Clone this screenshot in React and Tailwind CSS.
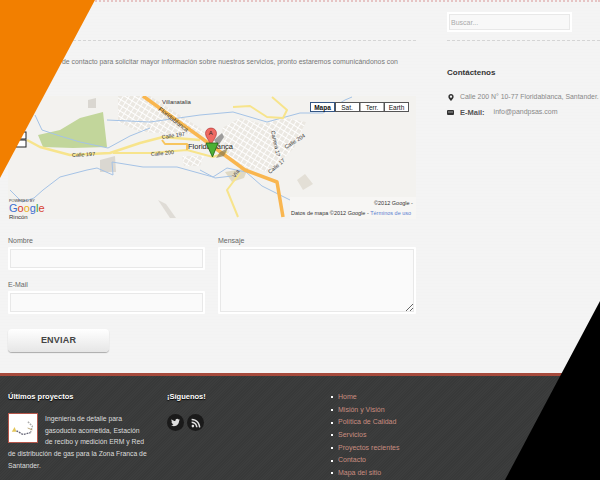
import { FaMapMarkerAlt, FaTwitter, FaRss } from "react-icons/fa";

const links = ["Home", "Misión y Visión", "Política de Calidad", "Servicios", "Proyectos recientes", "Contacto", "Mapa del sitio"];

function MapDrawing() {
  return (
    <svg viewBox="8 96 408 123" className="block h-[123px] w-[408px] bg-[#f3f2ef]" style={{ fontFamily: "Liberation Sans, sans-serif" }}>
      <defs>
        <pattern id="streets" width="5" height="5" patternUnits="userSpaceOnUse" patternTransform="rotate(32)">
          <rect width="5" height="5" fill="#ebe8e2" />
          <path d="M0 0H5M0 0V5" stroke="#ffffff" strokeWidth="1.8" />
        </pattern>
      </defs>

      {/* built up areas */}
      <path d="M118 96H150L200 128L206 134L180 134L140 132L118 122Z" fill="url(#streets)" />
      <path d="M222 128L240 118L262 124L286 118L306 122L294 148L270 172L248 168L226 158Z" fill="url(#streets)" />
      <path d="M182 156L204 156L200 166L184 166Z" fill="url(#streets)" />
      <path d="M100 160L115 156L116 172L100 172Z" fill="#dad7d1" />
      <path d="M297 180L305 174L313 184L303 190Z" fill="#e3dfd6" />
      <path d="M225 172L248 168L244 178L232 182Z" fill="#dfd9c4" />
      <path d="M88 100L96 98L96 108L88 108Z" fill="#dad7d1" />
      <path d="M158 200L170 218L176 218L166 204Z" fill="#dfdcd6" />

      {/* park */}
      <path d="M38 135L60 130L80 118L103 112L107 147L73 148L43 147Z" fill="#c2d69b" />

      {/* rivers */}
      <g fill="none" stroke="#a5c3e6" strokeWidth="1">
        <path d="M35 115L42 130L60 136L80 142L108 148L130 136L150 128" />
        <path d="M107 120L150 122L200 115L233 112L267 122L300 113L323 113L345 100L352 97" />
        <path d="M10 190L22 202L34 198L43 190L60 177L87 170L97 168L113 175L112 162L143 167L177 167L213 177L227 168L246 172L262 186L290 200" />
        <path d="M200 170L215 178L232 176" />
      </g>

      {/* yellow roads */}
      <g fill="none" stroke="#f7e48c" strokeWidth="2" strokeLinejoin="round">
        <path d="M27 140L40 147L70 155L110 153L140 143L163 137L200 140" strokeWidth="2.5" />
        <path d="M113 153L150 153L187 150L213 157L227 152" />
        <path d="M162 140L165 144L187 144L187 150" stroke="#f7c55f" />
        <path d="M233 107L250 106L267 117L283 118L287 110L272 97" />
        <path d="M240 173L227 190L238 217" />
      </g>

      {/* main road */}
      <path d="M143 96L200 137L245 170L277 182L283 217" fill="none" stroke="#f9b64f" strokeWidth="3.5" strokeLinejoin="round" />

      {/* road names */}
      <g fontSize="5.500" fill="#333">
        <text x="162" y="104" fontSize="6">Villanatalia</text>
        <text x="72" y="157" transform="rotate(-3 72 157)">Calle 197</text>
        <text x="162" y="139" transform="rotate(-8 162 139)">Calle 197</text>
        <text x="151" y="156" transform="rotate(-5 151 156)">Calle 200</text>
        <text x="158" y="110" fontSize="6" transform="rotate(38 158 110)">Floridablanca</text>
        <text x="271" y="131" transform="rotate(78 271 131)">Carrera 17</text>
        <text x="286" y="149" transform="rotate(-32 286 149)">Calle 204</text>
        <text x="270" y="174" transform="rotate(-40 270 174)">Calle 17</text>
        <text x="235" y="178" transform="rotate(-55 235 178)">Vía</text>
        <text x="9" y="218.500" fontSize="6">Rincón</text>
      </g>
      <text x="188" y="149" fontSize="7.500" fill="#222">Floridablanca</text>

      {/* marker */}
      <path d="M214 140L222 133L224 137L218 146Z" fill="#777" opacity="0.7" />
      <path d="M220 152L228 148L224 156L216 158Z" fill="#8a7a50" opacity="0.7" />
      <path d="M211 128C207.500 128 205.500 130.500 205.500 133.500C205.500 137.500 209.500 140 211 146C212.500 140 216.500 137.500 216.500 133.500C216.500 130.500 214.500 128 211 128Z" fill="#ee6a63" stroke="#a33" strokeWidth="0.6" />
      <text x="208.800" y="135" fontSize="6" fill="#222">A</text>
      <path d="M206 143L218 143L212.500 157Z" fill="#4cb034" stroke="#1f5f14" strokeWidth="0.8" />

      {/* zoom control */}
      <rect x="16" y="132" width="10" height="7" fill="#fff" stroke="#222" />
      <rect x="16" y="140" width="10" height="7" fill="#fff" stroke="#222" />

      {/* map type buttons */}
      <g fontSize="6.500" fill="#111" textAnchor="middle">
        <rect x="310.500" y="102.500" width="24" height="9" fill="#fff" stroke="#345684" />
        <text x="322.500" y="109.500" fontWeight="700">Mapa</text>
        <rect x="335.500" y="102.500" width="24" height="9" fill="#fff" stroke="#555" />
        <text x="347" y="109.500">Sat.</text>
        <rect x="360" y="102.500" width="24" height="9" fill="#fff" stroke="#555" />
        <text x="372" y="109.500">Terr.</text>
        <rect x="384.500" y="102.500" width="24" height="9" fill="#fff" stroke="#555" />
        <text x="396.500" y="109.500">Earth</text>
      </g>

      {/* attribution */}
      <rect x="290" y="197" width="126" height="22" fill="#fff" opacity="0.35" />
      <text x="374" y="204.500" fontSize="5.500" fill="#333">©2012 Google -</text>
      <text x="291" y="214.500" fontSize="5.500" fill="#333">
        Datos de mapa ©2012 Google - <tspan fill="#5b7fd0">Términos de uso</tspan>
      </text>
      <text x="9" y="201.500" fontSize="3.800" fill="#333">POWERED BY</text>
      <text x="9" y="211.500" fontSize="11" fontWeight="400">
        <tspan fill="#3b6fd0">G</tspan>
        <tspan fill="#d8402f">o</tspan>
        <tspan fill="#e8b020">o</tspan>
        <tspan fill="#3b6fd0">g</tspan>
        <tspan fill="#3a9a3a">l</tspan>
        <tspan fill="#d8402f">e</tspan>
      </text>
    </svg>
  );
}

function Label({ children }) {
  return <div className="h-[12px] text-[7px] leading-[11px] text-[#666]">{children}</div>;
}

const fieldClass = "block w-full rounded-[1px] border-2 border-white bg-[#fafafa] shadow-[inset_0_0_0_1px_#e8e8e8] outline-none";

export default function App() {
  return (
    <div className="relative flex h-[480px] w-[600px] flex-col overflow-hidden bg-[#f4f4f4] font-['Liberation_Sans',Arial,sans-serif]">
      {/* content */}
      <div className="flex h-[373px] border-t-2 border-dotted border-[#e6c4c4] bg-[repeating-linear-gradient(0deg,#f4f4f4_0,#f4f4f4_2px,#f3f3f3_2px,#f3f3f3_3px)]">
        <div className="ml-2 w-[408px]">
          <div className="mt-[38px] border-t border-dashed border-[#d5d5d5]" />
          <p className="mt-[15px] h-[40px] pl-[54px] text-[6.900px] leading-[12px] text-[#777]">
            de contacto para solicitar mayor información sobre nuestros servicios, pronto estaremos comunicándonos con
          </p>
          <MapDrawing />
          <div className="mt-4 grid grid-cols-[197px_198px] gap-x-[13px]">
            <div className="flex flex-col gap-[9px]">
              <div>
                <Label>Nombre</Label>
                <input className={`${fieldClass} h-[23px]`} />
              </div>
              <div>
                <Label>E-Mail</Label>
                <input className={`${fieldClass} h-[23px]`} />
              </div>
            </div>
            <div>
              <Label>Mensaje</Label>
              <textarea className={`${fieldClass} h-[67px]`} />
            </div>
          </div>
          <button className="mt-[15px] flex h-[23px] w-[101px] items-center justify-center rounded-sm bg-gradient-to-b from-white to-[#e6e6e6] text-[9px] font-bold tracking-[0.2px] text-[#444] shadow-[0_1px_1px_#aaa]">
            ENVIAR
          </button>
        </div>

        <div className="ml-[31px] flex-1">
          <input
            placeholder="Buscar..."
            className="mt-[10px] block h-[20px] w-[125px] border-2 border-white bg-[#f8f8f8] px-[2px] text-[7px] shadow-[inset_0_0_0_1px_#e8e8e8] outline-none placeholder:text-[#aaa]"
          />
          <div className="mt-[8px] border-t border-dashed border-[#d5d5d5]" />
          <h3 className="mt-[26px] text-[8px] font-bold leading-[12px] text-[#333]">Contáctenos</h3>
          <div className="mt-[12px] flex h-[13px] items-center text-[6.900px] text-[#888]">
            <FaMapMarkerAlt className="ml-[1px] mr-[6px] h-[7px] w-[6px] text-[#333]" />
            <span className="whitespace-nowrap">Calle 200 N° 10-77 Floridablanca, Santander.</span>
          </div>
          <div className="mt-[2px] flex h-[13px] items-center text-[7px] text-[#888]">
            <svg viewBox="0 0 7 5" className="mr-[6px] h-[5px] w-[7px]">
              <rect width="7" height="5" rx="1" fill="#333" />
              <path d="M1 2H6" stroke="#ccc" strokeWidth="0.7" />
            </svg>
            <span className="mr-[9px] text-[7.500px] font-bold text-[#555]">E-Mail:</span>
            <span>info@pandpsas.com</span>
          </div>
        </div>
      </div>

      {/* footer */}
      <div className="flex flex-1 border-t-[3px] border-[#a64a3c] bg-[repeating-linear-gradient(135deg,#3c3d3d_0,#3c3d3d_1px,#383939_1px,#383939_2px)] pt-[15px]">
        <div className="ml-2 w-[141px]">
          <h4 className="text-[7.500px] font-bold leading-[12px] text-white [text-shadow:0_1px_1px_#000]">Últimos proyectos</h4>
          <div className="mt-[10px] text-[6.800px] leading-[11.7px] text-[#ddd]">
            <div className="float-left mr-[7px] h-[30px] w-[30px] border border-[#b5564a] bg-white">
              <svg viewBox="0 0 30 30" className="h-full w-full">
                <path d="M3 19L6 14L8 19Z" fill="#e3c65a" />
                <path d="M8 18L15 22L23 20" fill="none" stroke="#667" strokeWidth="1.500" strokeDasharray="2 1" />
                <path d="M23 20L25 13L20 8" fill="none" stroke="#aaa" strokeWidth="1.500" strokeDasharray="2 1" />
                <path d="M20 15L25 17" fill="none" stroke="#b5a070" strokeWidth="1" />
              </svg>
            </div>
            Ingeniería de detalle para gasoducto acometida, Estación<br />
            de recibo y medición ERM y Red de distribución de gas para la Zona Franca de Santander.
          </div>
        </div>

        <div className="ml-[18px] w-[150px]">
          <h4 className="text-[7.500px] font-bold leading-[12px] text-white [text-shadow:0_1px_1px_#000]">¡Síguenos!</h4>
          <div className="mt-[11px] flex gap-[3px]">
            <span className="flex h-[17px] w-[17px] items-center justify-center rounded-full bg-[#1a1a1a]">
              <FaTwitter className="h-[9px] w-[9px] text-[#ddd]" />
            </span>
            <span className="flex h-[17px] w-[17px] items-center justify-center rounded-full bg-[#1a1a1a]">
              <FaRss className="h-[10px] w-[10px] text-[#ddd]" />
            </span>
          </div>
        </div>

        <ul className="ml-[14px] flex flex-col text-[7px] leading-[12.670px] text-[#c98d80]">
          {links.map((link) => (
            <li key={link} className="flex items-center">
              <span className="mr-[5px] h-[2px] w-[2px] bg-white" />
              {link}
            </li>
          ))}
        </ul>
      </div>

      {/* corner shapes */}
      <div className="absolute left-0 top-0 h-[178px] w-[95px] bg-[#f27f00] [clip-path:polygon(0_0,100%_0,0_100%)]" />
      <div className="absolute bottom-0 right-0 h-[179px] w-[95px] bg-black [clip-path:polygon(100%_0,100%_100%,0_100%)]" />
    </div>
  );
}
